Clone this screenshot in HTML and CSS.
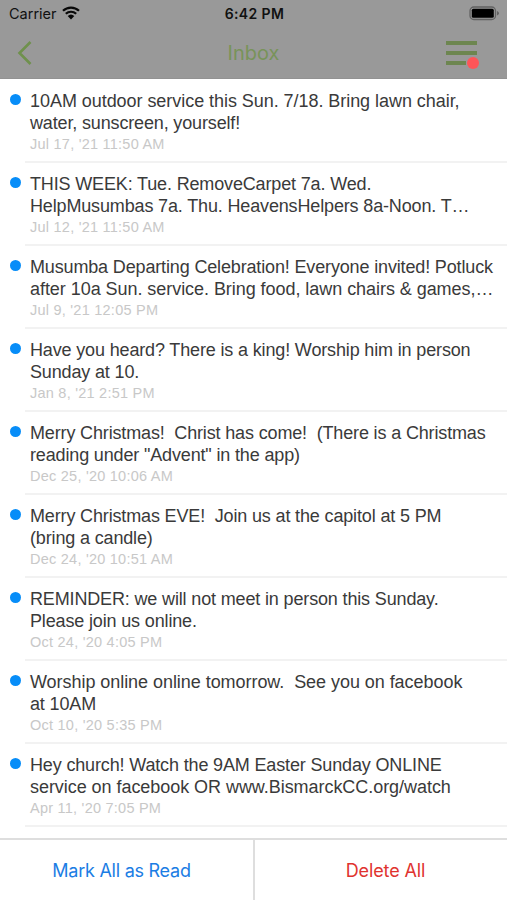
FILE: index.html
```html
<!DOCTYPE html>
<html lang="en">
  <head>
    <meta charset="UTF-8" />
    <meta name="viewport" content="width=device-width, initial-scale=1.0" />
    <title>Inbox</title>
    <link rel="stylesheet" href="styles.css">
  </head>
  <body>
    <header class="header">
      <div class="status-bar">
        <div class="carrier">
          <span>Carrier</span>
          <svg class="wifi" width="18" height="14" viewBox="0 0 18 14">
            <path d="M1 4.800a11.600 11.600 0 0 1 16 0M3.800 7.800a7.600 7.600 0 0 1 10.400 0" fill="none" stroke="#080808" stroke-width="2.200" />
            <path d="M5.700 10a4.800 4.800 0 0 1 6.600 0L9 13.500z" fill="#080808" />
          </svg>
        </div>
        <div class="time">6:42 PM</div>
        <svg class="battery" width="31" height="15" viewBox="0 0 31 15">
          <rect x="1" y="1" width="25.5" height="12.5" rx="3.8" fill="none" stroke="#626262" stroke-width="1.3" />
          <rect x="2.8" y="2.8" width="22" height="9" rx="1.5" fill="#000" />
          <path d="M28 5v4.600q2-.8 2-2.300t-2-2.300z" fill="#626262" />
        </svg>
      </div>
      <nav class="nav-bar">
        <svg class="back" width="15" height="24" viewBox="0 0 15 24">
          <path d="M13.500 1L2.500 12l11 11" fill="none" stroke="#6f914d" stroke-width="2.600" />
        </svg>
        <h1>Inbox</h1>
        <div class="menu">
          <span></span>
          <span></span>
          <span></span>
          <i class="badge"></i>
        </div>
      </nav>
    </header>

    <ul class="messages">
      <li class="message">
        <p><span class="wide">10AM outdoor service this Sun. 7/18. Bring lawn chair,</span><br>water, sunscreen, yourself!</p>
        <time>Jul 17, '21 11:50 AM</time>
      </li>
      <li class="message">
        <p>THIS WEEK: Tue. RemoveCarpet 7a. Wed.<br>HelpMusumbas 7a. Thu. HeavensHelpers 8a-Noon. T…</p>
        <time>Jul 12, '21 11:50 AM</time>
      </li>
      <li class="message">
        <p>Musumba Departing Celebration! Everyone invited! Potluck<br><span class="wide">after 10a Sun. service. Bring food, lawn chairs &amp; games,…</span></p>
        <time>Jul 9, '21 12:05 PM</time>
      </li>
      <li class="message">
        <p>Have you heard? There is a king! Worship him in person<br>Sunday at 10.</p>
        <time>Jan 8, '21 2:51 PM</time>
      </li>
      <li class="message">
        <p>Merry Christmas!&nbsp; Christ has come!&nbsp; (There is a Christmas<br>reading under "Advent" in the app)</p>
        <time>Dec 25, '20 10:06 AM</time>
      </li>
      <li class="message">
        <p>Merry Christmas EVE!&nbsp; Join us at the capitol at 5 PM<br>(bring a candle)</p>
        <time>Dec 24, '20 10:51 AM</time>
      </li>
      <li class="message">
        <p>REMINDER: we will not meet in person this Sunday.<br>Please join us online.</p>
        <time>Oct 24, '20 4:05 PM</time>
      </li>
      <li class="message">
        <p><span class="wide">Worship online online tomorrow.&nbsp; See you on facebook</span><br>at 10AM</p>
        <time>Oct 10, '20 5:35 PM</time>
      </li>
      <li class="message">
        <p>Hey church! Watch the 9AM Easter Sunday ONLINE<br><span class="wide">service on facebook OR www.BismarckCC.org/watch</span></p>
        <time>Apr 11, '20 7:05 PM</time>
      </li>
    </ul>

    <footer class="actions">
      <button class="read">Mark All as Read</button>
      <button class="delete">Delete All</button>
    </footer>
  </body>
</html>
```

FILE: styles.css
```css
* {
  box-sizing: border-box;
}
body {
  margin: 0;
  height: 900px;
  display: flex;
  flex-direction: column;
  overflow: hidden;
  background-color: #fff;
  font-family: "Liberation Sans", Arial, sans-serif;
}
.header {
  height: 79px;
  flex: none;
  background-color: #999;
  border-bottom: 1px solid #929292;
  font-family: Inter, sans-serif;
}
.status-bar {
  height: 27px;
  padding: 0 7px 0 9px;
  display: grid;
  grid-template-columns: 1fr auto 1fr;
  align-items: center;
  font-size: 14px;
  color: #111;
}
.carrier {
  display: flex;
  align-items: center;
  gap: 5px;
  font-size: 14.5px;
}
.wifi {
  margin-top: -2px;
}
.time {
  font-weight: 600;
  font-size: 14px;
  letter-spacing: 0.4px;
}
.battery {
  justify-self: end;
}
.nav-bar {
  height: 51px;
  padding: 0 30px 0 17px;
  display: grid;
  grid-template-columns: 1fr auto 1fr;
  align-items: center;
}
.nav-bar h1 {
  margin: 0;
  padding-left: 13px;
  font-size: 20px;
  font-weight: 400;
  color: #789359;
}
.menu {
  position: relative;
  justify-self: end;
  width: 31px;
  display: flex;
  flex-direction: column;
  gap: 6px;
}
.menu span {
  height: 4px;
  background-color: #6d8650;
}
.menu span:nth-child(3) {
  width: 20px;
}
.badge {
  position: absolute;
  right: -2px;
  bottom: -4px;
  width: 12px;
  height: 12px;
  border-radius: 50%;
  background-color: #ff5558;
}
.messages {
  flex: 1;
  margin: 0;
  padding: 1px 0 0;
  list-style: none;
}
.message {
  position: relative;
  height: 83px;
  margin-left: 25px;
  padding: 11px 0 0 5px;
  border-bottom: 2px solid #f2f2f2;
  white-space: nowrap;
}
.message::before {
  content: "";
  position: absolute;
  left: -15px;
  top: 13.5px;
  width: 11px;
  height: 11px;
  border-radius: 50%;
  background-color: #078df8;
}
.message p {
  margin: 0;
  font-size: 18px;
  line-height: 21.5px;
  letter-spacing: -0.15px;
  color: #3a3a3a;
}
.message .wide {
  letter-spacing: -0.05px;
}
.message time {
  display: block;
  font-size: 14.5px;
  line-height: 21px;
  letter-spacing: 0.24px;
  color: #c8c8c8;
}
.actions {
  height: 62px;
  flex: none;
  display: grid;
  grid-template-columns: 255px 1fr;
  border-top: 2px solid #dedede;
}
.actions button {
  padding: 0;
  border: none;
  background: none;
  font-family: Inter, sans-serif;
  font-size: 18px;
  letter-spacing: -0.1px;
}
.actions .read {
  padding-right: 10px;
  border-right: 2px solid #dedede;
  letter-spacing: -0.25px;
  color: #1b7de4;
}
.actions .delete {
  padding-left: 9px;
  color: #e0332f;
}
```
